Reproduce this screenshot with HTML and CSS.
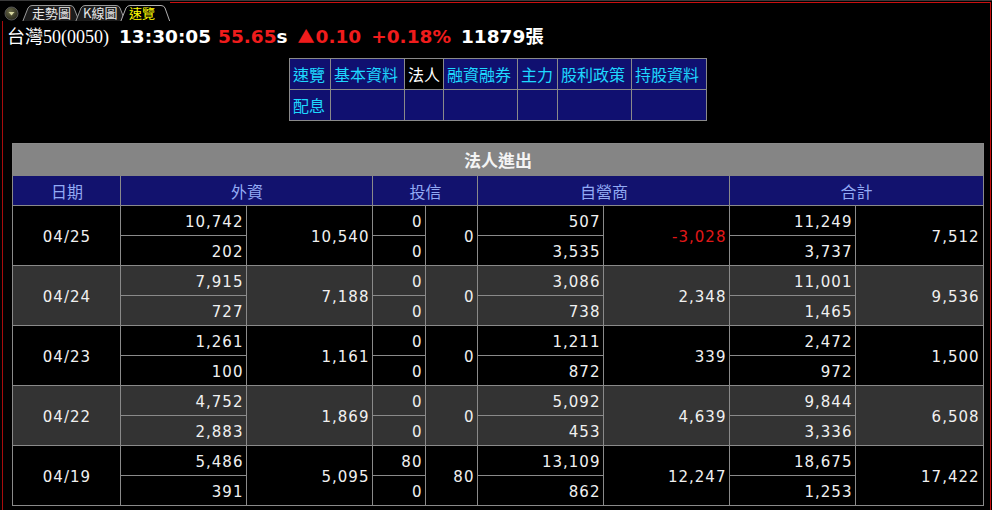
FILE: index.html
```html
<!DOCTYPE html>
<html lang="zh-Hant">
<head>
<meta charset="utf-8">
<title>法人進出</title>
<link rel="stylesheet" href="styles.css">
</head>
<body>
<div class="window">
  <div class="tabbar">
    <div class="tabs">
      <svg class="tabs-bg" width="170" height="21" viewBox="0 0 170 21">
        <defs>
          <radialGradient id="knob" cx="0.4" cy="0.35" r="0.7">
            <stop offset="0" stop-color="#6a6a4a"/>
            <stop offset="1" stop-color="#262618"/>
          </radialGradient>
        </defs>
        <circle cx="11.5" cy="12.5" r="6.5" fill="url(#knob)" stroke="#555" stroke-width="1"/>
        <path d="M8.5 11 L14.5 11 L11.5 14.5 Z" fill="#d8d8a0"/>
        <path d="M22.5 21 L28 7 Q29.5 4.5 32 4.5 L70 4.5 Q73 4.5 74 7 L79.5 21" fill="#1c1c1c" stroke="#9a9a9a"/>
        <path d="M75.5 21 L81 7 Q82.5 4.5 85 4.5 L116 4.5 Q119 4.5 120 7 L125.5 21" fill="#1c1c1c" stroke="#9a9a9a"/>
        <path d="M120.5 21 L126 7 Q127.5 4.5 130 4.5 L161 4.5 Q164 4.5 165 7 L170 21" fill="#000" stroke="#b0b0b0"/>
      </svg>
      <div class="tab-labels">
        <span class="tab t1">走勢圖</span>
        <span class="tab t2">K線圖</span>
        <span class="tab t3 active">速覽</span>
      </div>
    </div>
    <div class="tabline"></div>
  </div>
  <div class="content">
    <div class="quote">
      <span class="q-name">台灣50(0050)</span>
      <span class="q-time">13:30:05</span>
      <span class="q-grp"><span class="q-red">55.65</span><span class="q-white">s</span></span>
      <span class="q-grp q-red"><span class="q-tri">▲</span>0.10</span>
      <span class="q-grp q-red">+0.18%</span>
      <span class="q-white">11879張</span>
    </div>

    <table class="nav">
      <colgroup>
        <col style="width:41px"><col style="width:74px"><col style="width:39px"><col style="width:74px"><col style="width:40px"><col style="width:74px"><col style="width:75px">
      </colgroup>
      <tr>
        <td>速覽</td><td>基本資料</td><td class="on">法人</td><td>融資融券</td><td>主力</td><td>股利政策</td><td>持股資料</td>
      </tr>
      <tr>
        <td>配息</td><td></td><td></td><td></td><td></td><td></td><td></td>
      </tr>
    </table>

    <table class="inst">
      <colgroup>
        <col style="width:108px"><col style="width:126px"><col style="width:126px"><col style="width:53px"><col style="width:52px"><col style="width:126px"><col style="width:126px"><col style="width:126px"><col style="width:127px">
      </colgroup>
      <tr class="title"><td colspan="9">法人進出</td></tr>
      <tr class="head">
        <td>日期</td><td colspan="2">外資</td><td colspan="2">投信</td><td colspan="2">自營商</td><td colspan="2">合計</td>
      </tr>

      <tr class="r odd"><td class="date" rowspan="2">04/25</td><td>10,742</td><td class="net" rowspan="2">10,540</td><td>0</td><td class="net" rowspan="2">0</td><td>507</td><td class="net neg" rowspan="2">-3,028</td><td>11,249</td><td class="net" rowspan="2">7,512</td></tr>
      <tr class="r odd"><td>202</td><td>0</td><td>3,535</td><td>3,737</td></tr>

      <tr class="r even"><td class="date" rowspan="2">04/24</td><td>7,915</td><td class="net" rowspan="2">7,188</td><td>0</td><td class="net" rowspan="2">0</td><td>3,086</td><td class="net" rowspan="2">2,348</td><td>11,001</td><td class="net" rowspan="2">9,536</td></tr>
      <tr class="r even"><td>727</td><td>0</td><td>738</td><td>1,465</td></tr>

      <tr class="r odd"><td class="date" rowspan="2">04/23</td><td>1,261</td><td class="net" rowspan="2">1,161</td><td>0</td><td class="net" rowspan="2">0</td><td>1,211</td><td class="net" rowspan="2">339</td><td>2,472</td><td class="net" rowspan="2">1,500</td></tr>
      <tr class="r odd"><td>100</td><td>0</td><td>872</td><td>972</td></tr>

      <tr class="r even"><td class="date" rowspan="2">04/22</td><td>4,752</td><td class="net" rowspan="2">1,869</td><td>0</td><td class="net" rowspan="2">0</td><td>5,092</td><td class="net" rowspan="2">4,639</td><td>9,844</td><td class="net" rowspan="2">6,508</td></tr>
      <tr class="r even"><td>2,883</td><td>0</td><td>453</td><td>3,336</td></tr>

      <tr class="r odd"><td class="date" rowspan="2">04/19</td><td>5,486</td><td class="net" rowspan="2">5,095</td><td>80</td><td class="net" rowspan="2">80</td><td>13,109</td><td class="net" rowspan="2">12,247</td><td>18,675</td><td class="net" rowspan="2">17,422</td></tr>
      <tr class="r odd"><td>391</td><td>0</td><td>862</td><td>1,253</td></tr>
    </table>
  </div>
</div>
</body>
</html>
```

FILE: styles.css
```css
html, body {
  margin: 0;
  padding: 0;
  background: #000;
}
body {
  width: 992px;
  height: 510px;
  overflow: hidden;
  font-family: "DejaVu Sans", "Noto Sans CJK TC", sans-serif;
  color: #f0f0f0;
}
.window {
  display: flex;
  flex-direction: column;
  height: 510px;
  border-top: 1px solid #3a3a3a;
  box-sizing: border-box;
}
.tabbar {
  display: flex;
  height: 20px;
  flex: none;
}
.tabs {
  display: grid;
  width: 170px;
  height: 20px;
  flex: none;
  overflow: hidden;
}
.tabs-bg, .tab-labels {
  grid-area: 1 / 1;
}
.tab-labels {
  display: flex;
  align-items: flex-start;
  padding-top: 4px;
  font-family: "Noto Sans CJK TC", sans-serif;
  font-size: 13px;
  line-height: 15px;
  color: #e8e8e8;
}
.tab { display: block; }
.t1 { margin-left: 32px; width: 50px; }
.t2 { margin-left: 1px; width: 46px; }
.t3 { margin-left: 0; }
.tab.active { color: #ffff00; }
.tabline {
  flex: 1;
  margin-top: 1px;
  border-top: 1px solid #c81010;
  border-right: 1px solid #c81010;
  margin-right: 1px;
}
.content {
  flex: 1;
  margin: 0 1px 0 2px;
  border-left: 1px solid #a80c0c;
  border-right: 1px solid #c81010;
  display: flex;
  flex-direction: column;
  align-items: center;
}
.quote {
  align-self: flex-start;
  display: flex;
  align-items: baseline;
  height: 28px;
  line-height: 28px;
  margin-left: 4px;
  margin-top: 1px;
  font-size: 18.5px;
  white-space: nowrap;
}
.q-name {
  font-family: "Liberation Serif", "Noto Sans CJK TC", serif;
  font-size: 18px;
  color: #fff;
  margin-right: 10px;
}
.q-time, .q-red, .q-white {
  font-weight: bold;
  font-family: "DejaVu Sans", "Noto Sans CJK TC", sans-serif;
}
.q-time { color: #fff; margin-right: 7px; }
.q-grp { margin-right: 10px; }
.q-white { color: #fff; }
.q-red { color: #f01c1c; }
.q-tri {
  font-family: "Noto Sans CJK TC", sans-serif;
  font-size: 17px;
  font-weight: normal;
  margin-right: 1px;
}

.nav {
  margin-top: 8px;
  margin-left: 3px;
  border-collapse: collapse;
  table-layout: fixed;
  width: 417px;
  font-family: "Noto Sans CJK TC", sans-serif;
  font-size: 16px;
  color: #1ed8ff;
}
.nav td {
  background: #101070;
  border: 1px solid #8a8a8a;
  height: 30px;
  padding: 0 0 0 3px;
  line-height: 28px;
  white-space: nowrap;
  overflow: hidden;
}
.nav td.on {
  background: #000;
  color: #fff;
}

.inst {
  margin-top: 22px;
  margin-left: 3px;
  border-collapse: collapse;
  table-layout: fixed;
  width: 970px;
  font-size: 15px;
}
.inst td {
  border: 1px solid #8a8a8a;
  padding: 0 3px 0 0;
  white-space: nowrap;
  overflow: hidden;
}
.inst .title td {
  background: #858585;
  color: #f4f4f4;
  font-family: "Noto Sans CJK TC", sans-serif;
  font-weight: bold;
  font-size: 17px;
  text-align: center;
  height: 31px;
  padding: 0;
  border-bottom-color: #858585;
}
.inst .head td {
  background: #12126e;
  color: #92aaf4;
  font-family: "Noto Sans CJK TC", sans-serif;
  font-size: 16px;
  text-align: center;
  height: 29px;
  padding: 0;
}
.inst .r td {
  height: 27px;
  padding-top: 2px;
  text-align: right;
  letter-spacing: 1px;
  color: #f0f0f0;
  line-height: 26px;
  vertical-align: middle;
}
.inst .r td.date {
  text-align: center;
  padding-right: 0;
}
.inst .r.odd td { background: #000; }
.inst .r.even td { background: #333333; }
.inst .r td.neg { color: #e01818; }
```
